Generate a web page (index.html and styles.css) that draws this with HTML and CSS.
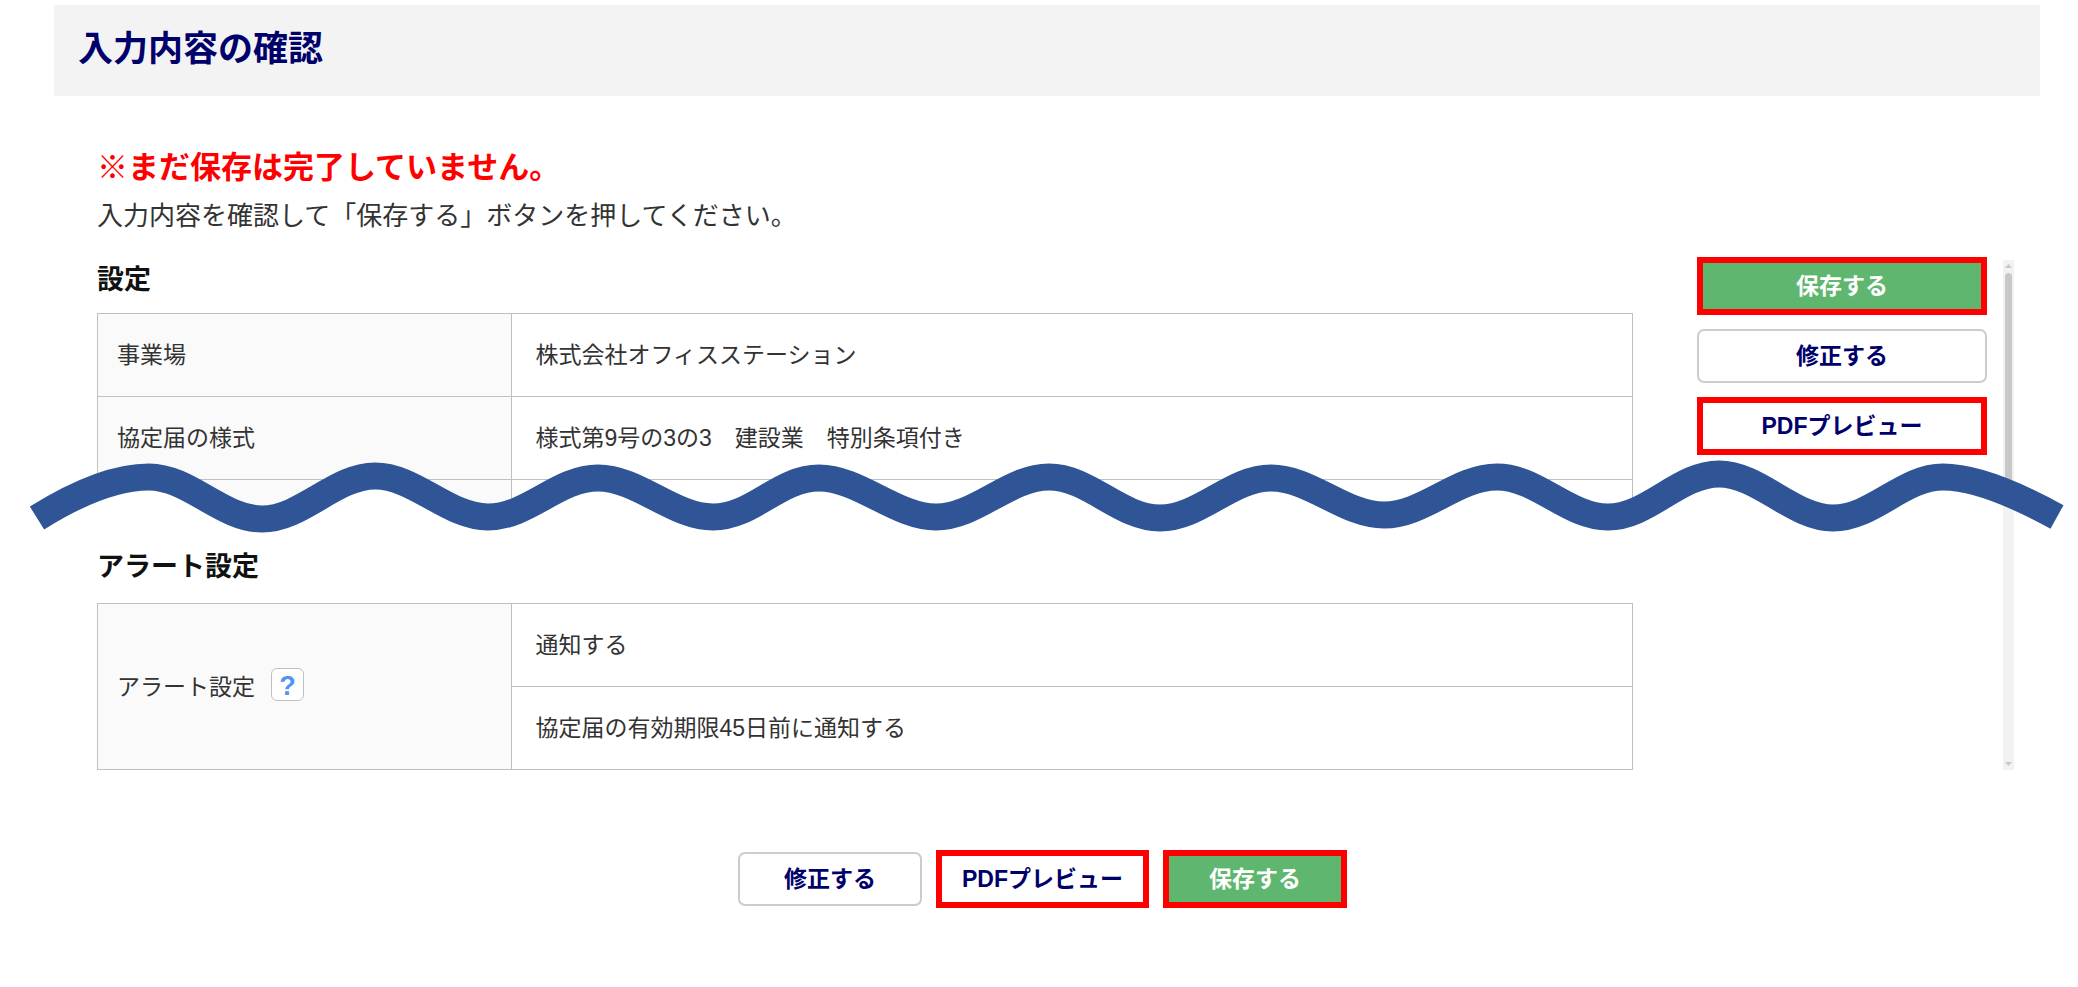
FILE: index.html
```html
<!DOCTYPE html>
<html lang="ja">
<head>
    <meta charset="UTF-8">
    <meta name="viewport" content="width=device-width, initial-scale=1.0">
    <title>入力内容の確認</title>
    <link rel="stylesheet" href="styles.css">
</head>
<body>
    <div class="page">
        <header class="page-header">
            <h1>入力内容の確認</h1>
        </header>

        <main class="main">
            <p class="warning">※まだ保存は完了していません。</p>
            <p class="lead">入力内容を確認して「保存する」ボタンを押してください。</p>

            <div class="confirm">
                <div class="sections">
                    <section class="section section-top">
                        <h2>設定</h2>
                        <table class="info-table">
                            <tbody>
                                <tr>
                                    <th scope="row">事業場</th>
                                    <td>株式会社オフィスステーション</td>
                                </tr>
                                <tr>
                                    <th scope="row">協定届の様式</th>
                                    <td>様式第9号の3の3　建設業　特別条項付き</td>
                                </tr>
                                <tr class="cut-row">
                                    <th></th>
                                    <td></td>
                                </tr>
                            </tbody>
                        </table>
                    </section>

                    <section class="section section-alert">
                        <h2>アラート設定</h2>
                        <table class="info-table">
                            <tbody>
                                <tr>
                                    <th scope="row" rowspan="2">
                                        <div class="label">
                                            <span>アラート設定</span>
                                            <button type="button" class="help" aria-label="ヘルプ">?</button>
                                        </div>
                                    </th>
                                    <td>通知する</td>
                                </tr>
                                <tr>
                                    <td>協定届の有効期限45日前に通知する</td>
                                </tr>
                            </tbody>
                        </table>
                    </section>
                </div>

                <div class="side">
                    <button type="button" class="btn btn-save marked">保存する</button>
                    <button type="button" class="btn">修正する</button>
                    <button type="button" class="btn marked">PDFプレビュー</button>
                </div>

                <div class="scrollbar">
                    <svg width="7" height="4" viewBox="0 0 7 4"><path d="M0 4 L3.5 0 L7 4 Z" fill="#c8c8c8"/></svg>
                    <div class="thumb"></div>
                    <svg width="7" height="4" viewBox="0 0 7 4"><path d="M0 0 L3.5 4 L7 0 Z" fill="#c8c8c8"/></svg>
                </div>
            </div>

            <div class="actions">
                <button type="button" class="btn">修正する</button>
                <button type="button" class="btn marked">PDFプレビュー</button>
                <button type="button" class="btn btn-save marked">保存する</button>
            </div>
        </main>

        <!-- 省略を表す波線 -->
        <svg class="wave" viewBox="0 455 2078 80" preserveAspectRatio="none" aria-hidden="true">
            <path fill="#fff" d="M37 518 C85 488 122 477 149 477 C189 477 222 519 262 519 C302 519 335 476 375 476 C415 476 448 517 488 517 C528 517 558 478 598 478 C638 478 673 517 713 517 C753 517 779 478 819 478 C859 478 896 517 936 517 C976 517 1009 477 1049 477 C1089 477 1120 518 1160 518 C1200 518 1231 478 1271 478 C1311 478 1344 515 1384 515 C1424 515 1457 477 1497 477 C1537 477 1568 517 1608 517 L1690 517 V535 H37 Z"/>
            <path fill="none" stroke="#2f5597" stroke-width="27" d="M37 518 C85 488 122 477 149 477 C189 477 222 519 262 519 C302 519 335 476 375 476 C415 476 448 517 488 517 C528 517 558 478 598 478 C638 478 673 517 713 517 C753 517 779 478 819 478 C859 478 896 517 936 517 C976 517 1009 477 1049 477 C1089 477 1120 518 1160 518 C1200 518 1231 478 1271 478 C1311 478 1344 515 1384 515 C1424 515 1457 477 1497 477 C1537 477 1568 517 1608 517 C1648 517 1679 474 1719 474 C1759 474 1793 518 1833 518 C1873 518 1903 477 1943 477 C1970 477 2008 490 2057 517"/>
        </svg>
    </div>
</body>
</html>
```

FILE: styles.css
```css
* {
    box-sizing: border-box;
}
body {
    margin: 0;
    background: #fff;
    color: #333;
    font-family: "Liberation Sans", "Noto Sans CJK JP", sans-serif;
    font-size: 23px;
}
h1, h2, p {
    margin: 0;
}
.page {
    position: relative;
    padding: 5px 38px 0 54px;
}
.page-header {
    height: 91px;
    padding: 22px 24px;
    background: #f3f3f3;
}
.page-header h1 {
    color: #00006b;
    font-size: 35px;
    line-height: 44px;
}
.main {
    padding: 50px 26px 0 43px;
}
.warning {
    color: #f00;
    font-size: 31px;
    font-weight: bold;
    line-height: 44px;
}
.lead {
    margin-top: 8px;
    font-size: 26px;
    line-height: 36px;
}
.confirm {
    display: flex;
    margin-top: 23px;
}
.sections {
    flex: 1;
}
.section h2 {
    padding-top: 3px;
    margin-bottom: 13px;
    color: #111;
    font-size: 27px;
    line-height: 40px;
}
.section-top {
    height: 287px;
}
.section-alert h2 {
    margin-bottom: 16px;
}
.info-table {
    width: 100%;
    border-collapse: collapse;
    table-layout: fixed;
}
.info-table th,
.info-table td {
    height: 83px;
    padding: 0 23px 4px;
    border: 1px solid #c0c0c0;
    font-weight: normal;
    text-align: left;
}
.info-table th {
    width: 27%;
    padding: 0 19px 4px;
    background: #fafafa;
}
.info-table .cut-row th,
.info-table .cut-row td {
    height: 36px;
}
.label {
    display: flex;
    align-items: center;
    gap: 16px;
}
.help {
    width: 33px;
    height: 33px;
    padding: 0;
    border: 1px solid #c0c0c0;
    border-radius: 6px;
    background: #fff;
    color: #4f94f0;
    font-family: inherit;
    font-size: 27px;
    font-weight: bold;
    line-height: 35px;
}
.side {
    display: flex;
    flex-direction: column;
    gap: 14px;
    width: 290px;
    margin-left: 64px;
}
.btn {
    height: 54px;
    padding: 0 20px 4px;
    border: 2px solid #ccc;
    border-radius: 7px;
    background: #fff;
    color: #00006b;
    font-family: inherit;
    font-size: 23px;
    font-weight: bold;
    cursor: pointer;
}
.btn-save {
    background: #5fb66e;
    color: #fff;
}
.marked {
    height: 58px;
    border: 6px solid #f00;
    border-radius: 0;
}
.scrollbar {
    display: flex;
    flex-direction: column;
    align-items: center;
    width: 11px;
    margin: 3px 0 0 16px;
    padding: 4px 0;
    background: #f2f2f2;
}
.thumb {
    width: 7px;
    height: 44%;
    margin: 5px 0 auto;
    border-radius: 4px;
    background: #c8c8c8;
}
.actions {
    display: flex;
    align-items: center;
    justify-content: center;
    gap: 14px;
    margin-top: 80px;
    padding-right: 26px;
}
.actions .btn {
    min-width: 184px;
}
.wave {
    position: absolute;
    top: 455px;
    left: 0;
    width: 100%;
    height: 80px;
}
```
